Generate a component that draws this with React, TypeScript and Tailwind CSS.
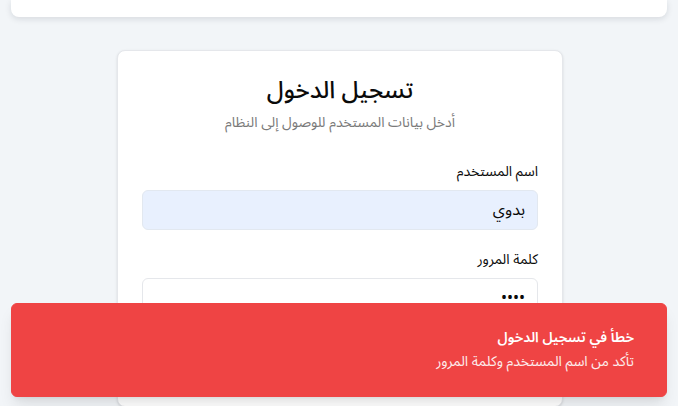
import { useState } from "react";

export default function App() {
  const [username, setUsername] = useState("بدوي");
  const [password, setPassword] = useState("1234");

  return (
    <div
      dir="rtl"
      className="relative min-h-[406px] h-[406px] overflow-hidden bg-[#f2f5f8] font-['Noto_Sans_Arabic','Noto_Sans',sans-serif] text-[#0a0a0a]"
    >
      {/* header bar, mostly scrolled out of view */}
      <div className="mx-[11px] h-[17px] rounded-b-lg bg-white shadow-[0_2px_6px_rgba(15,23,42,0.12)]" />

      <div dir="ltr" className="mt-[33px] flex">
        <div dir="rtl" className="ml-[117px] w-[446px] rounded-lg border border-[#e5e7eb] bg-white px-6 pt-6 pb-6 shadow-sm">
          <h1 className="text-center text-2xl leading-8 font-medium">تسجيل الدخول</h1>
          <p className="mt-1.5 text-center text-sm leading-5 text-[#7a7a7a]">
            أدخل بيانات المستخدم للوصول إلى النظام
          </p>

          <form className="mt-[29px]" onSubmit={(e) => e.preventDefault()}>
            <label className="block text-sm leading-5 font-normal">اسم المستخدم</label>
            <input
              value={username}
              onChange={(e) => setUsername(e.target.value)}
              className="mt-2 h-10 w-full rounded-md border border-[#e2e8f0] bg-[#e8f0fe] px-3 text-base outline-none"
            />

            <label className="mt-5 block text-sm leading-5 font-normal">كلمة المرور</label>
            <input
              type="password"
              value={password}
              onChange={(e) => setPassword(e.target.value)}
              className="mt-2 h-10 w-full rounded-md border border-[#e5e7eb] bg-white px-3 text-base outline-none"
            />

            <button className="mt-6 h-10 w-full rounded-md bg-[#0f172a] text-sm font-medium text-white">
              دخول
            </button>
          </form>
        </div>
      </div>

      {/* toast */}
      <div className="absolute right-[11px] bottom-[9px] left-[11px] flex h-[94px] flex-col justify-center gap-1 rounded-md border border-[#ef4444] bg-[#ef4444] pr-8 pl-6 text-white shadow-lg">
        <div className="text-sm leading-5 font-semibold">خطأ في تسجيل الدخول</div>
        <div className="text-sm leading-5 opacity-90">تأكد من اسم المستخدم وكلمة المرور</div>
      </div>
    </div>
  );
}
